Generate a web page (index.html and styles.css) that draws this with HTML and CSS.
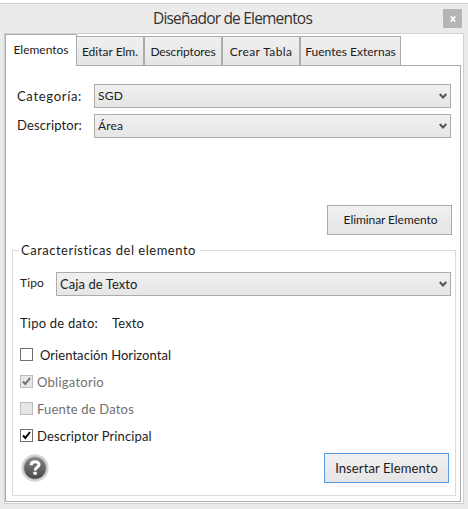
FILE: index.html
```
<!DOCTYPE html>
<html lang="es">
<head>
<meta charset="utf-8">
<title>Diseñador de Elementos</title>
<link rel="stylesheet" href="styles.css">
</head>
<body>
<div class="window">
  <header class="titlebar">
    <h1>Diseñador de Elementos</h1>
    <button class="close" aria-label="Cerrar"><svg width="6" height="6" viewBox="0 0 6 6"><path d="M.7 .5 5.3 5.5M5.3 .5 .7 5.5" stroke="#fff" stroke-width="1.7"/></svg></button>
  </header>
  <main class="client">
    <nav class="tabs">
      <div class="tab active">Elementos</div>
      <div class="tab t-edit">Editar Elm.</div>
      <div class="tab t-desc">Descriptores</div>
      <div class="tab t-table">Crear Tabla</div>
      <div class="tab t-ext">Fuentes Externas</div>
    </nav>
    <section class="panel">
      <div class="field"><span class="label l-cat">Categoría:</span><div class="combo"><span class="v-sgd">SGD</span><svg class="chev" width="8" height="7" viewBox="0 0 8 7"><path d="M.7 1 4 4.5 7.3 1" fill="none" stroke="#555" stroke-width="2.1"/></svg></div></div>
      <div class="field"><span class="label l-desc">Descriptor:</span><div class="combo"><span class="v-area">Área</span><svg class="chev" width="8" height="7" viewBox="0 0 8 7"><path d="M.7 1 4 4.5 7.3 1" fill="none" stroke="#555" stroke-width="2.1"/></svg></div></div>
      <button class="btn remove">Eliminar Elemento</button>
      <fieldset class="group">
        <legend>Características del elemento</legend>
        <div class="type-row"><span class="type-label">Tipo</span><div class="combo"><span>Caja de Texto</span><svg class="chev" width="8" height="7" viewBox="0 0 8 7"><path d="M.7 1 4 4.5 7.3 1" fill="none" stroke="#555" stroke-width="2.1"/></svg></div></div>
        <div class="data-row"><span class="data-label">Tipo de dato:</span><span class="data-value">Texto</span></div>
        <div class="check horiz"><i class="box"></i><span>Orientación Horizontal</span></div>
        <div class="check disabled oblig"><i class="box"><svg width="11" height="11" viewBox="0 0 11 11"><path d="M2 5.5 4.3 8 9 2" fill="none" stroke="#707070" stroke-width="2"/></svg></i><span>Obligatorio</span></div>
        <div class="check disabled source"><i class="box"></i><span>Fuente de Datos</span></div>
        <div class="check main"><i class="box"><svg width="11" height="11" viewBox="0 0 11 11"><path d="M2 5.5 4.3 8 9 2" fill="none" stroke="#000" stroke-width="2"/></svg></i><span>Descriptor Principal</span></div>
        <div class="actions">
          <svg class="help" width="28" height="28" viewBox="0 0 28 28">
            <defs><linearGradient id="g" x1="0" y1="0" x2="0" y2="1"><stop offset="0" stop-color="#858585"/><stop offset="1" stop-color="#494949"/></linearGradient></defs>
            <circle cx="14" cy="14" r="13.7" fill="#d6d6d6"/><circle cx="14" cy="14" r="11.8" fill="#b8b8b8"/><circle cx="14" cy="14" r="10.8" fill="url(#g)"/>
            <path d="M10.2 11.2C10.2 6.7 18 6.6 18 10.8C18 13.4 14.1 13.2 14.1 16.4" fill="none" stroke="#fff" stroke-width="3"/><rect x="12.4" y="17.7" width="3.4" height="3.1" rx=".6" fill="#fff"/>
          </svg>
          <button class="btn insert">Insertar Elemento</button>
        </div>
      </fieldset>
    </section>
  </main>
</div>
</body>
</html>
```
FILE: styles.css
```
* { box-sizing: border-box; }
body { margin: 0; background: #fff; font: 13px/16px Lato, "Open Sans", sans-serif; color: #1c1c1c; overflow: hidden; }
button { font: inherit; color: inherit; padding: 0; }
.window { width: 468px; height: 506px; margin-top: 3px; padding: 0 4px; border-top: 1px solid #d0d0d0; background: #ebebeb; }
.titlebar { display: grid; grid-template-columns: 1fr 19px; height: 29px; margin-right: 2px; }
h1 { margin: 0; padding-left: 149px; font: 15.5px/29px "Open Sans", sans-serif; letter-spacing: -.81px; color: #333; white-space: nowrap; }
.close { width: 19px; height: 19px; margin-top: 5px; border: 0; background: #b5b5b5; display: flex; align-items: center; justify-content: center; }
.client { width: 460px; height: 471px; border: 1px solid #d0d0d0; background: #fff; display: flex; flex-direction: column; }
.tabs { display: flex; align-items: flex-end; height: 32px; font-size: 12px; }
.tab { height: 30px; border: 1px solid #acacac; border-left-width: 0; background: linear-gradient(#f0f0f0, #e5e5e5); line-height: 29px; text-align: center; white-space: nowrap; }
.active { width: 72px; height: 32px; line-height: 29px; background: #fff; border-left-width: 1px; border-bottom: 0; position: relative; z-index: 1; }
.t-edit { width: 67px; }
.t-desc, .t-table, .t-ext { border-left-width: 1px; }
.t-desc { width: 78px; letter-spacing: -.16px; }
.t-table { width: 78px; letter-spacing: .38px; }
.t-ext { width: 101px; }
.panel { width: 456px; height: 437px; margin-top: -1px; border: 1px solid #acacac; padding: 18px 8px 0 6px; }
.field { display: grid; grid-template-columns: 77px 357px; padding-left: 5px; height: 30px; }
.label { line-height: 24px; }
.l-cat { letter-spacing: .69px; }
.l-desc { letter-spacing: .13px; line-height: 22px; }
.combo { height: 24px; border: 1px solid #acacac; background: linear-gradient(#f0f0f0, #e5e5e5); display: flex; align-items: center; justify-content: space-between; padding: 0 3px; letter-spacing: .08px; }
.v-sgd { font-size: 12px; letter-spacing: .2px; }
.v-area { font-size: 12px; letter-spacing: .12px; }
.btn { display: block; width: 125px; height: 30px; border: 1px solid #acacac; background: linear-gradient(#f0f0f0, #e5e5e5); }
.remove { margin: 61px 0 0 315px; font-size: 12px; letter-spacing: -.08px; padding-left: 2px; }
.group { width: 444px; height: 254px; margin: 7px 0 0; border: 1px solid #dcdcdc; padding: 0 0 0 7px; min-width: 0; }
.group legend { height: 16px; padding: 0 4px 0 2px; margin-left: -1px; letter-spacing: .5px; }
.type-row { display: grid; grid-template-columns: 36px 395px; margin-top: 14px; }
.type-label { font-size: 12px; letter-spacing: .13px; line-height: 22px; }
.data-row { display: flex; margin-top: 19px; height: 16px; }
.data-label { width: 92px; letter-spacing: .22px; }
.data-value { letter-spacing: .14px; }
.check { display: flex; align-items: center; gap: 4px; height: 27px; }
.horiz { margin-top: 10px; gap: 7px; letter-spacing: .05px; }
.oblig { letter-spacing: .26px; }
.source { letter-spacing: .19px; }
.main { letter-spacing: .12px; }
.box { width: 13px; height: 13px; border: 1px solid #707070; background: #fff; display: block; }
.box svg { display: block; }
.disabled { color: #707070; }
.disabled .box { border-color: #bcbcbc; background: #e6e6e6; }
.actions { display: flex; justify-content: space-between; align-items: center; margin: 4px 6px 0 1px; }
.insert { border-color: #569de5; letter-spacing: .1px; }
```
